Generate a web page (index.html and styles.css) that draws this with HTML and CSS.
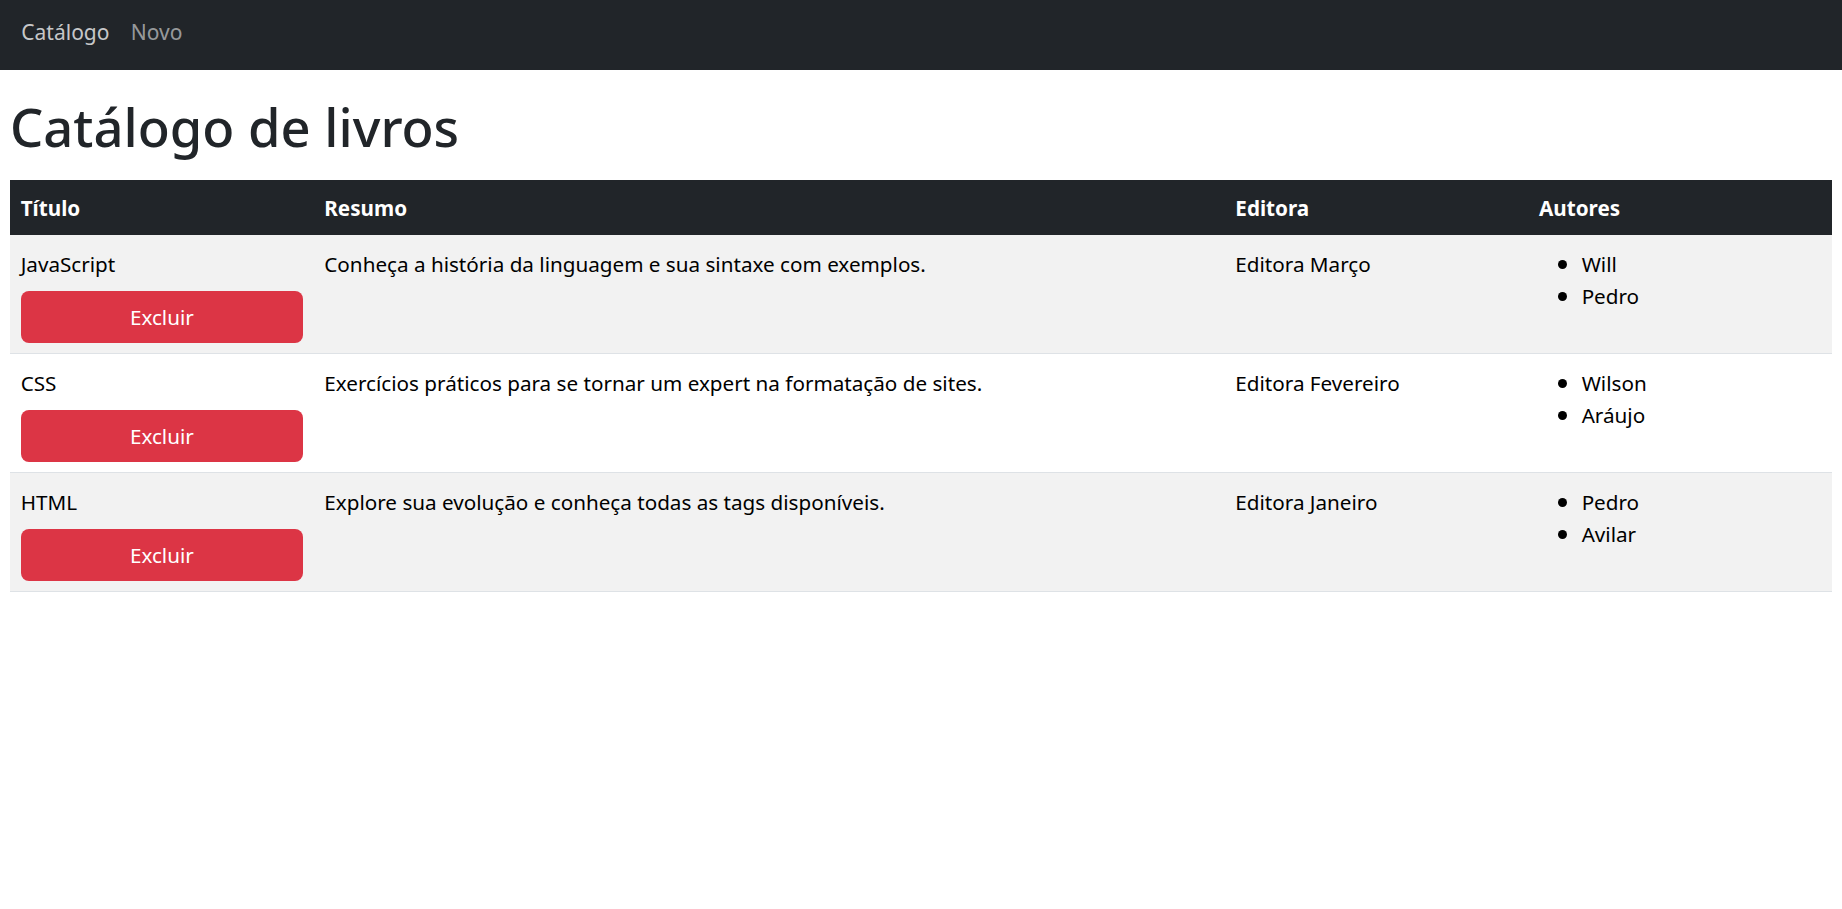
FILE: index.html
```html
<!DOCTYPE html>
<html lang="pt-BR">
<head>
<meta charset="utf-8">
<title>Catálogo de livros</title>
<link rel="stylesheet" href="styles.css">
</head>
<body>
<nav class="navbar">
  <a class="nav-link active" href="#">Catálogo</a>
  <a class="nav-link" href="#">Novo</a>
</nav>
<main class="page">
  <h1 class="title">Catálogo de livros</h1>
  <table class="books">
    <colgroup>
      <col class="col-narrow">
      <col class="col-wide">
      <col class="col-narrow">
      <col class="col-narrow">
    </colgroup>
    <thead>
      <tr>
        <th>Título</th>
        <th>Resumo</th>
        <th>Editora</th>
        <th>Autores</th>
      </tr>
    </thead>
    <tbody>
      <tr>
        <td>JavaScript<button class="btn-danger" type="button">Excluir</button></td>
        <td>Conheça a história da linguagem e sua sintaxe com exemplos.</td>
        <td>Editora Março</td>
        <td><ul class="authors"><li>Will</li><li>Pedro</li></ul></td>
      </tr>
      <tr>
        <td>CSS<button class="btn-danger" type="button">Excluir</button></td>
        <td>Exercícios práticos para se tornar um expert na formatação de sites.</td>
        <td>Editora Fevereiro</td>
        <td><ul class="authors"><li>Wilson</li><li>Aráujo</li></ul></td>
      </tr>
      <tr>
        <td>HTML<button class="btn-danger" type="button">Excluir</button></td>
        <td>Explore sua evolução e conheça todas as tags disponíveis.</td>
        <td>Editora Janeiro</td>
        <td><ul class="authors"><li>Pedro</li><li>Avilar</li></ul></td>
      </tr>
    </tbody>
  </table>
</main>
</body>
</html>
```
FILE: styles.css
```css
* { box-sizing: border-box; }

body {
  margin: 0;
  font-family: "Noto Sans", "Open Sans", sans-serif;
  font-size: 20.67px;
  line-height: 32px;
  color: #212529;
  background: #fff;
}

.navbar {
  display: flex;
  align-items: flex-start;
  height: 70px;
  padding: 16px 10.67px 0;
  background: #212529;
  font-size: 21px;
}

.nav-link {
  padding: 0 10.67px;
  color: rgba(255, 255, 255, 0.55);
  text-decoration: none;
}

.nav-link.active {
  color: rgba(255, 255, 255, 0.76);
}

.page {
  padding: 0 10px;
}

.title {
  margin: 26px 0 23px;
  font-size: 52.5px;
  line-height: 61px;
  font-weight: 500;
  color: #212529;
}

.books {
  width: 100%;
  border-collapse: collapse;
  table-layout: fixed;
}

.col-narrow { width: 16.667%; }
.col-wide { width: 50%; }

.books th {
  padding: 12px 10.67px 11px;
  background: #212529;
  color: #fff;
  font-weight: 700;
  text-align: left;
}

.books td {
  padding: 13px 10.67px 10px;
  vertical-align: top;
  color: #000;
  border-bottom: 1px solid #dee2e6;
}

.books tbody tr:nth-child(odd) td {
  background: #f2f2f2;
}

.btn-danger {
  display: block;
  width: 100%;
  height: 52px;
  margin-top: 11px;
  border: none;
  border-radius: 8px;
  background: #dc3545;
  color: #fff;
  font-family: inherit;
  font-size: 20.67px;
  line-height: 32px;
  cursor: pointer;
}

.authors {
  margin: 0;
  padding-left: 42.67px;
  list-style: none;
}

.authors li::before {
  content: "";
  display: inline-block;
  width: 9px;
  height: 9px;
  margin-left: -23.5px;
  margin-right: 14.5px;
  border-radius: 50%;
  background: #000;
  vertical-align: 3px;
}
```
